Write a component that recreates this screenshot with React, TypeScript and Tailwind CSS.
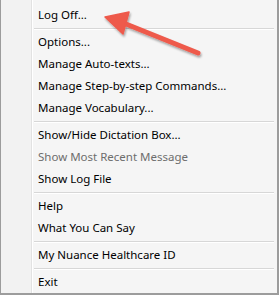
import React from 'react';

type Item = { label: string; disabled?: boolean } | 'sep';

const items: Item[] = [
    { label: 'Log Off...' },
    'sep',
    { label: 'Options...' },
    { label: 'Manage Auto-texts...' },
    { label: 'Manage Step-by-step Commands...' },
    { label: 'Manage Vocabulary...' },
    'sep',
    { label: 'Show/Hide Dictation Box...' },
    { label: 'Show Most Recent Message', disabled: true },
    { label: 'Show Log File' },
    'sep',
    { label: 'Help' },
    { label: 'What You Can Say' },
    'sep',
    { label: 'My Nuance Healthcare ID' },
    'sep',
    { label: 'Exit' },
];

export default function App() {
    return (
        <div
            className="relative w-[279px] h-[295px] bg-[#f2f2f2] border-l border-r-2 border-b-2 border-[#9c9c9c] flex overflow-hidden"
            style={{ fontFamily: '"Segoe UI", "Noto Sans", Arial, sans-serif' }}
        >
            {/* icon gutter */}
            <div className="w-[31px] shrink-0 border-r border-[#e2e2e2]" />
            <div className="flex-1 bg-[#f5f5f5] border-l border-white pt-[4px]">
                {items.map((it, i) =>
                    it === 'sep' ? (
                        <div key={i} className="h-[5px] flex items-center pl-[1px] pr-[3px]">
                            <div className="w-full h-[2px] border-t border-[#d7d7d7] border-b border-b-white" />
                        </div>
                    ) : (
                        <div
                            key={i}
                            className={`h-[22px] flex items-center pl-[5px] text-[11.5px] ${
                                it.disabled ? 'text-[#6d6d6d]' : 'text-black'
                            }`}
                        >
                            {it.label}
                        </div>
                    )
                )}
            </div>

            {/* callout arrow */}
            <svg className="absolute left-0 top-0 pointer-events-none" width="279" height="295">
                <defs>
                    <filter id="sh" x="-20%" y="-20%" width="140%" height="140%">
                        <feDropShadow dx="1" dy="2" stdDeviation="1.2" floodColor="#000" floodOpacity="0.35" />
                    </filter>
                </defs>
                <g filter="url(#sh)" fill="#ee5a4c" stroke="#ee5a4c">
                    <line x1="120" y1="22" x2="197" y2="53" strokeWidth="5" strokeLinecap="round" />
                    <polygon points="104,17 128,12 122,34" strokeWidth="1.5" strokeLinejoin="round" />
                </g>
            </svg>
        </div>
    );
}
